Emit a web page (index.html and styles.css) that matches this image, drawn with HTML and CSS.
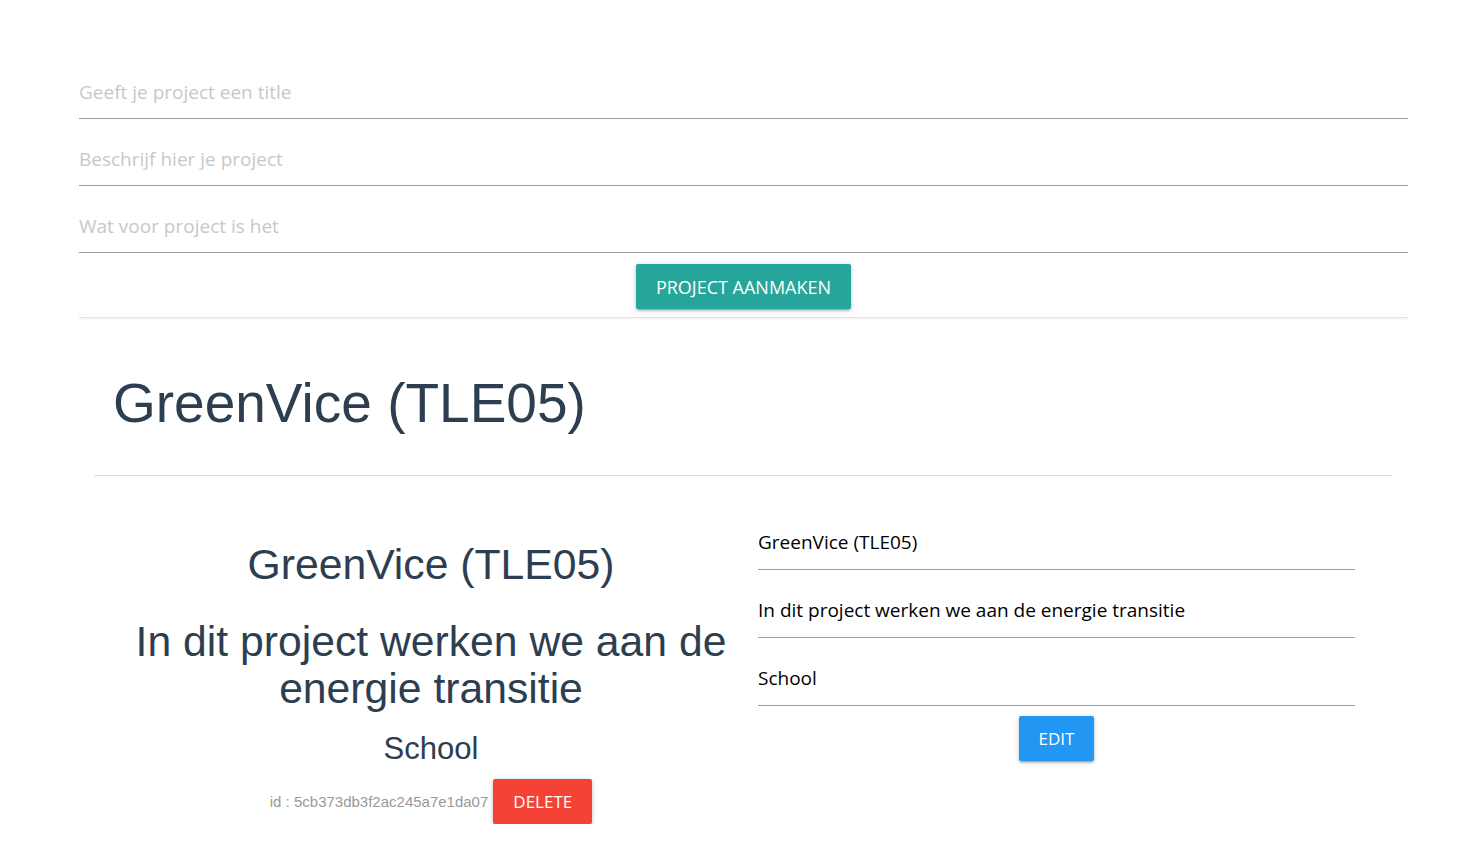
FILE: index.html
```html
<!DOCTYPE html>
<html lang="nl">
<head>
<meta charset="utf-8">
<title>Projecten</title>
<link rel="stylesheet" href="styles.css">
</head>
<body>
<div class="form-card">
  <input class="field" type="text" placeholder="Geeft je project een title">
  <input class="field" type="text" placeholder="Beschrijf hier je project">
  <input class="field" type="text" placeholder="Wat voor project is het">
  <div class="btn-row">
    <button class="btn btn-teal">Project aanmaken</button>
  </div>
</div>

<div class="container">
  <h1 class="page-title">GreenVice (TLE05)</h1>
  <hr class="divider">
  <div class="row">
    <div class="col-left">
      <h3 class="p-title">GreenVice (TLE05)</h3>
      <h4 class="p-desc">In dit project werken we aan de energie transitie</h4>
      <h5 class="p-type">School</h5>
      <div class="id-row">
        <span class="p-id">id : 5cb373db3f2ac245a7e1da07</span>
        <button class="btn btn-red">Delete</button>
      </div>
    </div>
    <div class="col-right">
      <input class="field field-val" type="text" value="GreenVice (TLE05)">
      <input class="field field-val" type="text" value="In dit project werken we aan de energie transitie">
      <input class="field field-val" type="text" value="School">
      <div class="btn-row">
        <button class="btn btn-blue">Edit</button>
      </div>
    </div>
  </div>
</div>
</body>
</html>
```

FILE: styles.css
```css
html, body {
  margin: 0;
  padding: 0;
  background: #fff;
}

body {
  font-family: "Open Sans", "Noto Sans", sans-serif;
  color: #2c3e50;
}

.form-card {
  margin: 0 53px 0 79px;
  padding: 73px 0 8px;
  border-bottom: 1px solid #e3e3e3;
  box-shadow: 0 2px 2px -1px rgba(0, 0, 0, 0.06);
}

.field {
  display: block;
  box-sizing: border-box;
  width: 100%;
  height: 46px;
  margin: 0 0 21px;
  padding: 0 0 8px;
  border: none;
  border-bottom: 1px solid #9e9e9e;
  outline: none;
  background: transparent;
  font-family: "Open Sans", "Noto Sans", sans-serif;
  font-size: 19px;
  color: #000;
}

.form-card .field:last-of-type {
  margin-bottom: 11px;
}

.field::placeholder {
  color: #c8c8c8;
}

.btn-row {
  display: flex;
  justify-content: center;
}

.btn {
  height: 45px;
  padding: 0 20px;
  border: none;
  border-radius: 2px;
  font-family: "Open Sans", "Noto Sans", sans-serif;
  font-size: 17px;
  text-transform: uppercase;
  color: #fff;
  cursor: pointer;
  box-shadow: 0 2px 2px 0 rgba(0, 0, 0, 0.14), 0 3px 1px -2px rgba(0, 0, 0, 0.12), 0 1px 5px 0 rgba(0, 0, 0, 0.2);
}

.btn-teal {
  background: #26a69a;
  font-size: 18px;
}
.btn-red { background: #f44336; }
.btn-blue { background: #2196f3; }

.container {
  margin: 0 69px 0 94px;
}

.page-title {
  margin: 55px 0 41px;
  padding-left: 19px;
  font-family: "Liberation Sans", Arial, sans-serif;
  font-weight: 400;
  font-size: 55px;
  line-height: 110%;
  color: #2c3e50;
}

.divider {
  margin: 0;
  border: none;
  border-top: 1px solid #dcdcdc;
}

.row {
  display: grid;
  grid-template-columns: 624px 627px;
  padding-left: 25px;
  margin-top: 48px;
}

.col-left {
  text-align: center;
  font-family: "Liberation Sans", Arial, sans-serif;
}

.p-title {
  margin: 17px 0 0;
  font-weight: 400;
  font-size: 42.7px;
  line-height: 47px;
}

.p-desc {
  margin: 30px 0 0;
  font-weight: 400;
  font-size: 42.7px;
  line-height: 47px;
}

.p-type {
  margin: 20px 0 0;
  font-weight: 400;
  font-size: 31px;
  line-height: 34px;
}

.id-row {
  display: flex;
  justify-content: center;
  align-items: center;
  gap: 5px;
  margin-top: 13px;
}

.p-id {
  font-size: 15px;
  color: #999;
}

.col-right {
  padding: 0 15px;
}

.field-val {
  margin-bottom: 22px;
}

.col-right .field-val:last-of-type {
  margin-bottom: 10px;
}
```
